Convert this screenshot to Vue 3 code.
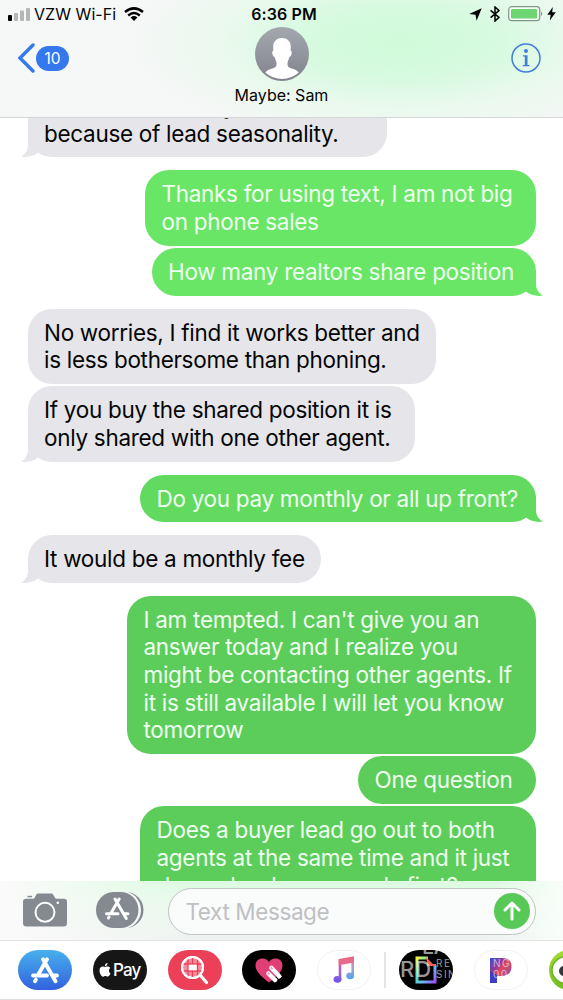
<script setup>
import { ref } from 'vue'

const draft = ref('')

const groups = [
  { from: 'them', bubbles: [
    { width: 359, cut: true, lines: ['y', 'because of lead seasonality.'] }
  ] },
  { from: 'me', tone: 'light', bubbles: [
    { width: 391, lines: ['Thanks for using text, I am not big', 'on phone sales'] },
    { width: 384.5, lines: ['How many realtors share position'] }
  ] },
  { from: 'them', bubbles: [
    { width: 408, lines: ['No worries, I find it works better and', 'is less bothersome than phoning.'] },
    { width: 387, lines: ['If you buy the shared position it is', 'only shared with one other agent.'] }
  ] },
  { from: 'me', tone: 'mid', bubbles: [
    { width: 396, lines: ['Do you pay monthly or all up front?'] }
  ] },
  { from: 'them', bubbles: [
    { width: 293, lines: ['It would be a monthly fee'] }
  ] },
  { from: 'me', tone: 'deep', open: true, bubbles: [
    { width: 409, lines: ["I am tempted. I can't give you an", 'answer today and I realize you', 'might be contacting other agents. If', 'it is still available I will let you know', 'tomorrow'] },
    { width: 178, lines: ['One question'] },
    { width: 396, lines: ['Does a buyer lead go out to both', 'agents at the same time and it just', 'depends who responds first?'] }
  ] }
]
</script>

<template>
  <div class="phone">
    <header class="header">
      <div class="status">
        <div class="status-left">
          <svg class="signal" width="22" height="13" viewBox="0 0 22 13">
            <rect x="0" y="7" width="4" height="6" rx="1" fill="#000" />
            <rect x="6" y="5" width="4" height="8" rx="1" fill="#b6b6b8" />
            <rect x="12" y="2.500" width="4" height="10.500" rx="1" fill="#b6b6b8" />
            <rect x="18" y="0" width="4" height="13" rx="1" fill="#b6b6b8" />
          </svg>
          <span class="carrier">VZW Wi-Fi</span>
          <svg width="20" height="14" viewBox="0 0 20 14" fill="none" stroke="#000" stroke-width="2.500">
            <path d="M1 5Q10 -2.300 19 5" />
            <path d="M4.200 8.500Q10 3.500 15.800 8.500" />
            <path d="M6.600 10.500Q10 7.700 13.400 10.500L10 14Z" fill="#000" stroke="none" />
          </svg>
        </div>
        <div class="clock">6:36 PM</div>
        <div class="status-right">
          <svg width="13" height="13" viewBox="0 0 13 13"><path d="M12.700 .3L7.600 12.700L6.500 6.700L.2 6Z" fill="#000" /></svg>
          <svg class="bluetooth" width="10" height="16" viewBox="0 0 10 16" fill="none" stroke="#000" stroke-width="1.500"><path d="M.6 4.300L9 11.300L5 15V1L9 4.700L.6 11.700" /></svg>
          <svg class="battery" width="36" height="16" viewBox="0 0 36 16">
            <rect x=".7" y=".7" width="31" height="14" rx="3" fill="#fff" fill-opacity=".6" stroke="#7f9983" stroke-width="1.200" />
            <rect x="3" y="3" width="26" height="9.500" rx="1" fill="#6fd472" />
            <path d="M33 5.200Q35.500 7.700 33 10.200Z" fill="#829a86" />
          </svg>
          <svg width="9" height="14" viewBox="0 0 9 14"><path d="M5.800 0L.3 7.700H3.700L2.800 13.600L8.800 5.300H5.200Z" fill="#000" /></svg>
        </div>
      </div>
      <div class="nav">
        <div class="back">
          <svg width="18" height="30" viewBox="0 0 18 30" fill="none" stroke="#3478ed" stroke-width="3.400"><path d="M16 2L3 15L16 28" stroke-linecap="round" /></svg>
          <span class="badge">10</span>
        </div>
        <div class="contact">
          <svg width="56" height="56" viewBox="0 0 56 56">
            <defs>
              <linearGradient id="avatarFill" x1="0" y1="0" x2="0" y2="1"><stop offset="0" stop-color="#a3a8ae" /><stop offset="1" stop-color="#82838d" /></linearGradient>
            </defs>
            <circle cx="28" cy="28" r="27" fill="url(#avatarFill)" />
            <path d="M28 12C21.500 12 19 16.500 19.200 21.500L19.400 24.500C17.600 24.500 18 30.500 20.600 31C21.200 33.500 22.300 35 22.500 37C22.700 40.500 21.500 41.500 18.500 42.500C14.500 43.500 12.500 44.500 11.300 46.500Q18.500 53 28 53Q37.500 53 44.700 46.500C43.500 44.500 41.500 43.500 37.500 42.500C34.500 41.500 33.300 40.500 33.500 37C33.700 35 34.800 33.500 35.400 31C38 30.500 38.400 24.500 36.600 24.500L36.800 21.500C37 16.500 34.500 12 28 12Z" fill="#fff" />
          </svg>
          <span class="name">Maybe: Sam</span>
        </div>
        <svg class="info" width="30" height="30" viewBox="0 0 30 30">
          <circle cx="15" cy="15" r="14" fill="none" stroke="#3f7fd8" stroke-width="1.500" />
          <circle cx="15" cy="8" r="2" fill="#3f7fd8" />
          <path d="M12 12.300H16.500V22H18.400V23.200H11.800V22H13.800V13.500H12Z" fill="#3f7fd8" />
        </svg>
      </div>
    </header>

    <main class="thread">
      <section v-for="(group, g) in groups" :key="g" class="group" :class="[group.from, group.tone]">
        <div v-for="(bubble, b) in group.bubbles" :key="b" class="bubble" :class="{ cut: bubble.cut }" :style="{ width: bubble.width + 'px' }">
          <div v-for="line in bubble.lines" :key="line" class="line">{{ line }}</div>
          <svg v-if="b === group.bubbles.length - 1 && !group.open" class="tail" width="18" height="26" viewBox="0 0 18 26">
            <path d="M1 0H11V15Q11.500 22.500 18 25.600Q8 27 1 21.600Z" />
          </svg>
        </div>
      </section>
    </main>

    <div class="composer">
      <svg class="camera" width="44" height="34" viewBox="0 0 44 34">
        <path d="M4.500 2.800H9V4.300H4.500Z" fill="#858990" />
        <path d="M3 5.800H10.500C12 5.800 12.500 1 15 .5H28.500C31 1 31.500 5.800 33.500 5.800H41Q44 5.800 44 9V30Q44 33.500 40.500 33.500H3.500Q0 33.500 0 30V9Q0 5.800 3 5.800Z" fill="#858990" />
        <circle cx="22" cy="19.300" r="9.500" fill="none" stroke="#fff" stroke-width="2" />
        <circle cx="34.800" cy="9.700" r="1.300" fill="#fff" />
      </svg>
      <svg class="apps" width="48" height="36" viewBox="0 0 48 36">
        <rect x="6" y="0" width="41.500" height="36" rx="18" fill="#858990" />
        <rect x="2" y="-1" width="43" height="38" rx="19" fill="#f6fbf7" />
        <rect x="0" y="0" width="42.500" height="36" rx="18" fill="#858990" />
        <g fill="none" stroke="#fff" stroke-width="3" stroke-linecap="round">
          <path d="M19 7L30.300 26.500M23.200 7L14.800 21.500M10.500 21.800H22M28.300 21.800H32M13.100 25L12.500 26" />
        </g>
      </svg>
      <div class="field">
        <input v-model="draft" type="text" placeholder="Text Message" />
        <button class="send" type="button">
          <svg width="36" height="36" viewBox="0 0 36 36" fill="none" stroke="#fff" stroke-width="3" stroke-linecap="round" stroke-linejoin="round"><path d="M18 26V10.500M11 17L18 10L25 17" /></svg>
        </button>
      </div>
    </div>

    <footer class="drawer">
      <div class="pill store">
        <svg width="30" height="27" viewBox="0 0 30 27" fill="none" stroke="#fff" stroke-width="3.800" stroke-linecap="round">
          <path d="M13 2.300L25.500 24.300M17 2.300L8 18M3 18.500H17M23.500 18.500H27M5.800 22.800L5 24.300" />
        </svg>
      </div>
      <div class="pill pay">
        <svg width="12" height="14" viewBox="0 0 12 14" fill="#fff"><path d="M8.500 0C8.700 1.700 7.300 3.200 5.900 3.200C5.700 1.500 7.100 .2 8.500 0ZM10 7.200C10 5.900 10.900 5.200 11.300 4.900C10 3 8 3.400 7.500 3.600C6.500 4 6.200 4.100 5.200 3.700C2.700 2.800 .5 4.500 .5 7.500C.5 10.500 2.700 13.900 4.200 13.700C5.200 13.500 5.500 13 6.500 13.100C7.500 13.100 7.800 13.800 8.900 13.600C10.300 13.300 11.100 11.500 11.500 10.300C10.500 9.900 10 8.900 10 7.200Z" /></svg>
        <span>Pay</span>
      </div>
      <div class="pill search">
        <svg width="30" height="30" viewBox="0 0 30 30" fill="none" stroke="#fff">
          <circle cx="12.500" cy="12.500" r="10.500" fill="#f58d9a" stroke-width="2" />
          <path d="M12.500 2V23M2 9H23M2 16H23M8 3V22M17.500 3V22" stroke="#ec4059" stroke-width="1.300" />
          <rect x="8.700" y="9.700" width="8" height="5.600" fill="#fff" stroke="none" />
          <circle cx="12.500" cy="12.500" r="10.500" stroke-width="2" />
          <path d="M20.500 20.500L26.500 27.500" stroke-width="3.200" stroke-linecap="round" />
        </svg>
      </div>
      <div class="pill touch">
        <svg width="28" height="25" viewBox="0 0 28 25">
          <path d="M14 24.500C8 20 .5 14 .5 7.500C.5 0 10 -2 14 4C18 -2 27.500 0 27.500 7.500C27.500 14 20 20 14 24.500Z" fill="#df3f75" />
          <g stroke="#fff" stroke-linecap="round"><path d="M16.500 10L24 18M13.500 15.500L20 22" stroke-width="4.500" /><path d="M24 18L25.500 19.700M20 22L21 23" stroke-width="4" stroke-linecap="butt" /></g>
          <path d="M15.700 9.200L17.500 11.200M12.800 14.700L14.500 16.400" stroke="#efa3b9" stroke-width="2" />
        </svg>
      </div>
      <div class="pill plain music">
        <svg width="24" height="28" viewBox="0 0 24 28">
          <defs>
            <linearGradient id="noteLeft" gradientUnits="userSpaceOnUse" x1="0" y1="2" x2="0" y2="27"><stop offset="0" stop-color="#e8517d" /><stop offset=".55" stop-color="#a565da" /><stop offset="1" stop-color="#6951e8" /></linearGradient>
            <linearGradient id="noteRight" gradientUnits="userSpaceOnUse" x1="0" y1="1" x2="0" y2="24"><stop offset="0" stop-color="#e87b91" /><stop offset=".5" stop-color="#a9a0cc" /><stop offset="1" stop-color="#4aa4ec" /></linearGradient>
          </defs>
          <path d="M8 3V23" stroke="url(#noteLeft)" stroke-width="2.600" />
          <ellipse cx="5.500" cy="23.300" rx="4" ry="3.400" fill="url(#noteLeft)" />
          <path d="M20.700 1V20" stroke="url(#noteRight)" stroke-width="2.600" />
          <ellipse cx="18.200" cy="19.800" rx="4" ry="3.400" fill="url(#noteRight)" />
          <path d="M6.700 3L22 .3V6.600L6.700 9.300Z" fill="#e76b88" />
        </svg>
      </div>
      <div class="rule"></div>
      <div class="pill frame">
        <svg width="24" height="28" viewBox="0 0 24 28">
          <defs>
            <linearGradient id="frameEdge" x1="0" y1="0" x2="1" y2="1"><stop offset="0" stop-color="#f7f34a" /><stop offset=".35" stop-color="#50e1b1" /><stop offset=".65" stop-color="#69bdf5" /><stop offset="1" stop-color="#a250f2" /></linearGradient>
          </defs>
          <path d="M14 2H3V26H21V9" fill="none" stroke="url(#frameEdge)" stroke-width="3" />
          <path d="M12 1L19 8H22V10H13V6Z" fill="#f16152" />
        </svg>
      </div>
      <div class="pill plain">
        <svg class="letter" width="22" height="25" viewBox="0 0 22 25">
          <defs><linearGradient id="pandora" x1="0" y1="0" x2="1" y2="1"><stop offset="0" stop-color="#3a4fd9" /><stop offset=".3" stop-color="#8a3a9d" /><stop offset=".5" stop-color="#e5485d" /><stop offset="1" stop-color="#4a55e0" /></linearGradient></defs>
          <path d="M0 0H12Q21.500 0 21.500 8.500Q21.500 18 11 18H7V25H0Z" fill="url(#pandora)" />
          <path d="M0 13L7 17V25H0Z" fill="#3c3fc4" />
        </svg>
      </div>
      <div class="pill owl">
        <svg width="54" height="40" viewBox="0 0 54 40"><ellipse cx="19" cy="20" rx="16" ry="14" fill="#fff" stroke="#6eb51d" stroke-width="1.500" /><circle cx="15" cy="21" r="5" fill="#35373b" /></svg>
      </div>
      <div class="watermark">
        <span class="mark-top">LA</span>
        <span class="mark-main">RD</span>
        <div class="mark-side">
          <span>RE</span><span>NG</span>
          <span>SIN</span><span>004</span>
        </div>
      </div>
    </footer>
  </div>
</template>

<style>
body {
  margin: 0;
}
</style>

<style scoped>
.phone {
  width: 563px;
  height: 1000px;
  overflow: hidden;
  display: flex;
  flex-direction: column;
  background: #fff;
  color: #050505;
  font-family: Inter, "Liberation Sans", sans-serif;
}

.header {
  box-sizing: border-box;
  height: 118px;
  flex: none;
  border-bottom: 1px solid #d3d5d5;
  background: radial-gradient(ellipse 270px 100px at 400px 42px, #d0fada 0%, #d6fadf 35%, rgba(228, 250, 233, 0.7) 65%, rgba(247, 247, 247, 0) 100%), #f6f7f7;
}
.status {
  height: 28px;
  display: grid;
  grid-template-columns: 1fr auto 1fr;
  align-items: center;
}
.status-left,
.status-right {
  display: flex;
  align-items: center;
}
.status-left {
  padding-left: 8px;
}
.carrier {
  margin: 0 8px 0 4px;
  font-size: 16px;
  letter-spacing: 0.05px;
}
.clock {
  font-size: 16px;
  font-weight: 600;
  letter-spacing: 0.1px;
  margin-left: 5px;
}
.status-right {
  justify-content: flex-end;
  padding-right: 7px;
}
.bluetooth {
  margin: 0 8px;
}
.battery {
  margin-right: 3px;
}

.nav {
  height: 80px;
  display: grid;
  grid-template-columns: 1fr auto 1fr;
  align-items: start;
}
.back {
  display: flex;
  align-items: center;
  gap: 1px;
  padding: 15px 0 0 17px;
}
.badge {
  width: 33px;
  height: 25px;
  border-radius: 13px;
  background: #3478ed;
  color: #fff;
  font-size: 15.5px;
  line-height: 25px;
  text-align: center;
}
.contact {
  display: flex;
  flex-direction: column;
  align-items: center;
  margin-top: -2px;
}
.name {
  margin-top: 3px;
  font-size: 16px;
  line-height: 20px;
}
.info {
  justify-self: end;
  margin: 15px 22px 0 0;
}

.thread {
  height: 763px;
  flex: none;
  overflow: hidden;
  display: flex;
  flex-direction: column;
  gap: 13px;
  padding: 0 27px 0 28px;
  box-sizing: border-box;
}
.group {
  flex: none;
  display: flex;
  flex-direction: column;
  align-items: flex-start;
  gap: 2.4px;
}
.group.me {
  align-items: flex-end;
}
.bubble {
  position: relative;
  box-sizing: border-box;
  padding: 10px 0 10px 16px;
  border-radius: 24px;
  background: #e5e5ea;
}
.bubble.cut {
  margin-top: -36px;
}
.cut .line:first-child {
  padding-left: 179px;
}
.line {
  height: 27.65px;
  line-height: 27.65px;
  font-size: 22.5px;
  letter-spacing: -0.3px;
  white-space: pre;
}
.me .bubble {
  padding-left: 16.5px;
  color: #effff0;
}
.light .bubble {
  background: #69e665;
}
.mid .bubble {
  background: #62da60;
}
.deep .bubble {
  background: #5ccd5a;
}
.tail {
  position: absolute;
  right: -7px;
  bottom: 0;
  fill: #e5e5ea;
}
.them .tail {
  right: auto;
  left: -7px;
  transform: scaleX(-1);
}
.light .tail {
  fill: #69e665;
}
.mid .tail {
  fill: #62da60;
}

.composer {
  height: 59px;
  flex: none;
  box-sizing: border-box;
  display: flex;
  align-items: flex-start;
  padding: 7px 27px 0 23px;
  background: linear-gradient(90deg, #fafafa 0, rgba(250, 250, 250, 0) 190px, rgba(250, 250, 250, 0) 490px, #f8fdf9 563px), linear-gradient(180deg, #dcfbe2 0, #e8faeb 35%, #f0f3f1 100%);
}
.camera {
  margin-top: 5px;
}
.apps {
  margin: 4px 0 0 29px;
}
.field {
  width: 368.5px;
  height: 47px;
  margin-left: auto;
  flex: none;
  box-sizing: border-box;
  display: flex;
  align-items: center;
  border: 1px solid #bfc4c2;
  border-radius: 24px;
  padding: 0 5px 0 17px;
  background: #fafbfb;
}
.field input {
  flex: 1;
  min-width: 0;
  padding: 0;
  border: none;
  outline: none;
  background: transparent;
  font-family: inherit;
  font-size: 22.5px;
  letter-spacing: -0.4px;
}
.field input::placeholder {
  color: #bfc0c3;
  opacity: 1;
}
.send {
  width: 36px;
  height: 36px;
  margin-top: -1px;
  padding: 0;
  border: none;
  border-radius: 50%;
  background: #58c957;
}
.send svg {
  display: block;
}

.drawer {
  position: relative;
  height: 60px;
  flex: none;
  box-sizing: border-box;
  display: flex;
  align-items: flex-start;
  gap: 20.8px;
  padding: 9px 0 0 18px;
  border-top: 1px solid #e1e3e2;
  border-bottom: 1px solid #dedede;
  overflow: hidden;
}
.pill {
  width: 54px;
  height: 40px;
  flex: none;
  box-sizing: border-box;
  border-radius: 20px;
  overflow: hidden;
  display: flex;
  align-items: center;
  justify-content: center;
}
.store {
  background: linear-gradient(#47b0ec, #3262df);
}
.pay {
  background: #161616;
  color: #fff;
  font-size: 17px;
  font-weight: 500;
  letter-spacing: -0.8px;
  gap: 2px;
}
.search {
  background: #ec4059;
}
.touch,
.frame {
  background: #000;
}
.plain {
  border: 1px solid #f2f2f2;
}
.letter {
  margin-left: 1px;
}
.rule {
  width: 2px;
  height: 36px;
  margin: 2px -8px 0 -7.6px;
  flex: none;
  background: #e5e5e6;
}
.owl {
  background: linear-gradient(#a5dd36, #72bd21);
}
.watermark {
  position: absolute;
  left: 398px;
  top: 0;
  width: 130px;
  height: 58px;
  color: rgba(255, 255, 255, 0.6);
}
.mark-top,
.mark-main,
.mark-side {
  position: absolute;
  line-height: 1;
}
.mark-top {
  left: 24px;
  top: -5px;
  font-size: 21px;
  font-weight: 500;
}
.mark-main {
  left: 2px;
  top: 17px;
  font-size: 22px;
  font-weight: 500;
  letter-spacing: 1px;
}
.mark-side {
  left: 38px;
  top: 17px;
  display: grid;
  grid-template-columns: 57px auto;
  font-size: 10px;
  line-height: 11px;
  letter-spacing: 1.5px;
}
</style>
